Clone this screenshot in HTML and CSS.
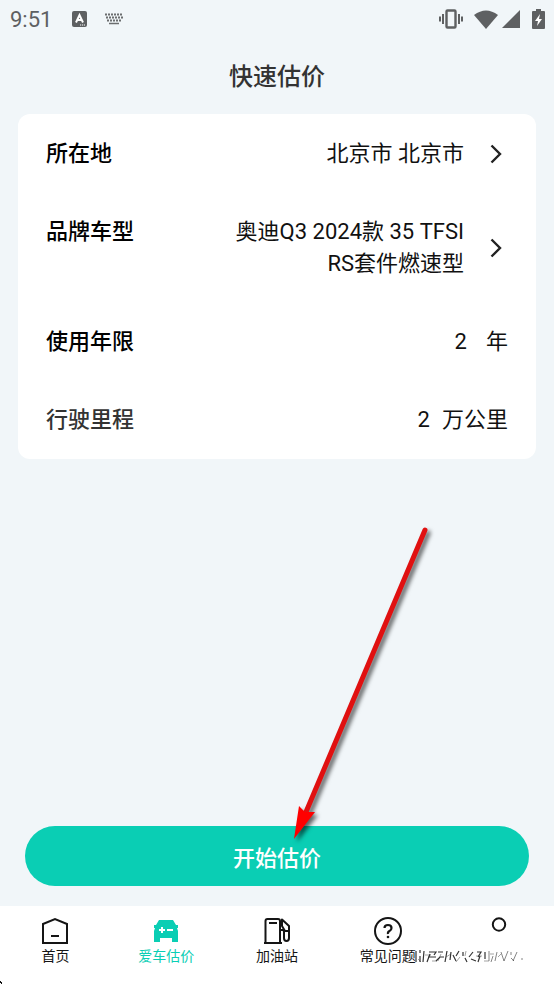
FILE: index.html
```html
<!DOCTYPE html>
<html lang="zh-CN">
<head>
<meta charset="utf-8">
<meta name="viewport" content="width=device-width, initial-scale=1">
<title>快速估价</title>
<link rel="stylesheet" href="styles.css">
</head>
<body>
<div class="status">
  <span class="time">9:51</span>
  <svg class="ic-a" width="15" height="16" viewBox="0 0 15 16"><rect width="15" height="16" rx="2" fill="#5e6062"/><path d="M4 11.500 7.500 4 11 11.500M5 9h5" fill="none" stroke="#fff" stroke-width="2"/><path d="M8 14h5" stroke="#fff" stroke-width="1.200" stroke-dasharray="1.200 .8"/></svg>
  <svg class="ic-kb" width="20" height="12" viewBox="0 0 20 12"><path d="M1 1.500h18M2 4.500h17M3 7.500h15" stroke="#6b6d6f" stroke-width="2" stroke-dasharray="2 1"/><path d="M5 10.500h10" stroke="#6b6d6f" stroke-width="1.500"/></svg>
  <span class="spacer"></span>
  <svg width="26" height="20" viewBox="0 0 26 20" fill="none" stroke="#5e6062"><rect x="8.500" y="1.500" width="9" height="17" rx="1" stroke-width="2.400"/><path d="M5 5v10M21 5v10M2 7.500v5M24 7.500v5" stroke-width="2"/></svg>
  <svg class="wifi" width="24" height="19" viewBox="0 0 24 19"><path d="M0 5Q12-4 24 5L12 19Z" fill="#5e6062"/></svg>
  <svg class="signal" width="18" height="18" viewBox="0 0 18 18"><path d="M18 0V18H0Z" fill="#5e6062"/></svg>
  <svg class="battery" width="13" height="20" viewBox="0 0 13 20"><path d="M4 0h5v2h3q1 0 1 1v16q0 1-1 1H1q-1 0-1-1V3q0-1 1-1h3Z" fill="#5e6062"/><path d="M8 5 3 12h3L5 17l5-7H7Z" fill="#fff"/></svg>
</div>
<header class="title"><h1>快速估价</h1></header>
<main>
  <form class="card">
    <div class="row">
      <span class="label">所在地</span>
      <button type="button" class="pick" aria-label="选择所在地"><span>北京市 北京市</span><svg width="12" height="20" viewBox="0 0 12 20"><path d="M1.500 1.500 10 10 1.500 18.500"/></svg></button>
    </div>
    <div class="row">
      <span class="label">品牌车型</span>
      <button type="button" class="pick" aria-label="选择品牌车型"><span>奥迪Q3 2024款 35 TFSI RS套件燃速型</span><svg width="12" height="20" viewBox="0 0 12 20"><path d="M1.500 1.500 10 10 1.500 18.500"/></svg></button>
    </div>
    <div class="row">
      <label class="label" for="years">使用年限</label>
      <span class="field"><input id="years" inputmode="numeric" value="2"><span class="unit">年</span></span>
    </div>
    <div class="row">
      <label class="label soft" for="miles">行驶里程</label>
      <span class="field near"><input id="miles" inputmode="numeric" value="2"><span class="unit">万公里</span></span>
    </div>
  </form>
</main>
<div class="action">
  <button type="button" class="start">开始估价</button>
  <svg class="arrow" width="160" height="330" viewBox="0 0 160 330"><path d="M139 14 20 296" class="shaft"/><path d="M8 323 13 290 19 296 29 296Z" class="head"/></svg>
</div>
<nav class="tabs">
  <a href="#home"><svg width="28" height="28" viewBox="0 0 28 28" fill="none" stroke="#151515" stroke-width="2"><path d="M2 7 14 2 26 7V26H2ZM10 19h8"/></svg><span>首页</span></a>
  <a href="#value" class="on"><svg width="28" height="28" viewBox="0 0 28 28"><path d="M7 3H21L24 8H26V11H25L26 14V25H20V21H8V25H2V14L3 11H2V8H4Z" fill="#0aceb4"/><path d="M7 13h6M10 10v6M15 13h6" stroke="#fff" stroke-width="2"/></svg><span>爱车估价</span></a>
  <a href="#fuel"><svg width="28" height="28" viewBox="0 0 28 28" fill="none" stroke="#151515" stroke-width="2" stroke-linejoin="round"><path d="M2.500 26V4Q2.500 2 4.500 2H15Q17 2 17 4V26M1 26H19M6 6H14M17 13H19.500Q21 13 21 15V21Q21 24 23.500 24Q26 24 26 21V9L19 2.500V9L22 14H26"/></svg><span>加油站</span></a>
  <a href="#faq"><svg width="28" height="28" viewBox="0 0 28 28" fill="none" stroke="#151515" stroke-width="2"><circle cx="14" cy="14" r="13"/><path d="M10.500 11Q10.500 8 14 8T17.500 11Q17.500 13 15.500 14T14 17" stroke-width="2.200"/><circle cx="14" cy="20" r="1.300" fill="#151515" stroke="none"/></svg><span>常见问题</span></a>
  <a href="#me" aria-label="我的"><svg width="28" height="28" viewBox="0 0 28 28" fill="none" stroke="#151515" stroke-width="2"><circle cx="14" cy="7.500" r="6.200"/></svg></a>
  <svg class="smudge" width="112" height="16" viewBox="0 0 112 16" fill="none" stroke="#333"><path d="M2 2v11M6 1v3M6 7v6M10 2l-1 11M15 3h7l-2 3M14 8h8M16 5l-3 8M24 3h5M22 12l4-4h4M33 2l-2 11M37 3l-1 8M39 6l3 6M45 2l-3 5M49 3v4M51 9l2 4M59 3l-4 5M57 10l5 2M63 3h4l-3 5M66 7l-2 6M71 3v7" stroke-width="1.200"/><path d="M75 2v10M79 7l-2 6M83 3l-2 9M87 3l3 9M94 2l-4 10M97 3v3M97 9l3 3M103 3l-4 9M108 9v2" stroke-width="1" opacity=".6"/><path d="M4 10l3 3M11 6h6M18 12h5M27 5l-3 7M32 8l5-3M46 8l-4 5M52 2l-1 5M62 7h6M70 12h5M76 5h4M84 8l3-3" stroke-width="1" opacity=".45"/></svg>
  <svg class="corner" width="3" height="3" viewBox="0 0 3 3"><path d="M0 0h1v1h1v2H1V2H0Z" fill="#111"/></svg>
</nav>
</body>
</html>
```
FILE: styles.css
```css
* { box-sizing: border-box; }
body {
  margin: 0;
  min-height: 100vh;
  display: flex;
  flex-direction: column;
  background: #f1f6f9;
  color: #111;
  font-family: Roboto, "Noto Sans CJK SC", sans-serif;
}
button, input { font: inherit; color: inherit; border: 0; background: none; padding: 0; }
svg { flex: none; }
.status { display: flex; align-items: center; height: 38px; padding: 0 9px 0 10px; color: #5e6062; }
.time { font-size: 22px; width: 62px; }
.ic-kb { margin-left: 17px; }
.spacer { flex: 1; }
.wifi { margin-left: 10px; }
.signal { margin-left: 4px; }
.battery { margin-left: 12px; }
.title { height: 76px; padding-bottom: 4px; display: flex; align-items: center; justify-content: center; }
h1 { margin: 0; font-size: 24px; font-weight: 500; color: #333; }
main { flex: 1; padding: 0 18px; }
.card { background: #fff; border-radius: 12px; padding: 1px 28px 0; font-size: 22px; line-height: 32px; }
.row { display: flex; justify-content: space-between; padding: 23px 0; min-height: 78px; }
.label { font-weight: 500; color: #000; }
.soft { color: #333; }
.pick { display: flex; align-items: center; gap: 26px; padding-right: 6px; text-align: right; }
.pick span { max-width: 230px; }
.pick path { fill: none; stroke: #222; stroke-width: 2.4; }
.field { display: flex; gap: 19px; }
.near { gap: 12px; }
.field input { width: 80px; text-align: right; }
.action { position: relative; padding: 0 25px 20px; }
.start { width: 100%; height: 60px; border-radius: 30px; background: #0aceb4; color: #fff; font-size: 22px; font-weight: 500; }
.arrow { position: absolute; left: 50%; bottom: 60px; margin-left: 9px; pointer-events: none; filter: drop-shadow(3px 3px 2px rgba(0, 0, 0, .6)); }
.shaft { stroke: #e01010; stroke-width: 5; stroke-linecap: round; }
.head { fill: #f00; }
.tabs { position: relative; display: grid; grid-template-columns: repeat(5, 1fr); height: 78px; padding-top: 11px; background: #fff; }
.tabs a { display: flex; flex-direction: column; align-items: center; color: #151515; font-size: 14px; line-height: 22px; text-decoration: none; white-space: nowrap; }
.tabs .on { color: #0aceb4; }
.smudge { position: absolute; right: 28px; top: 43px; pointer-events: none; }
.corner { position: absolute; left: 0; bottom: 0; }
```
